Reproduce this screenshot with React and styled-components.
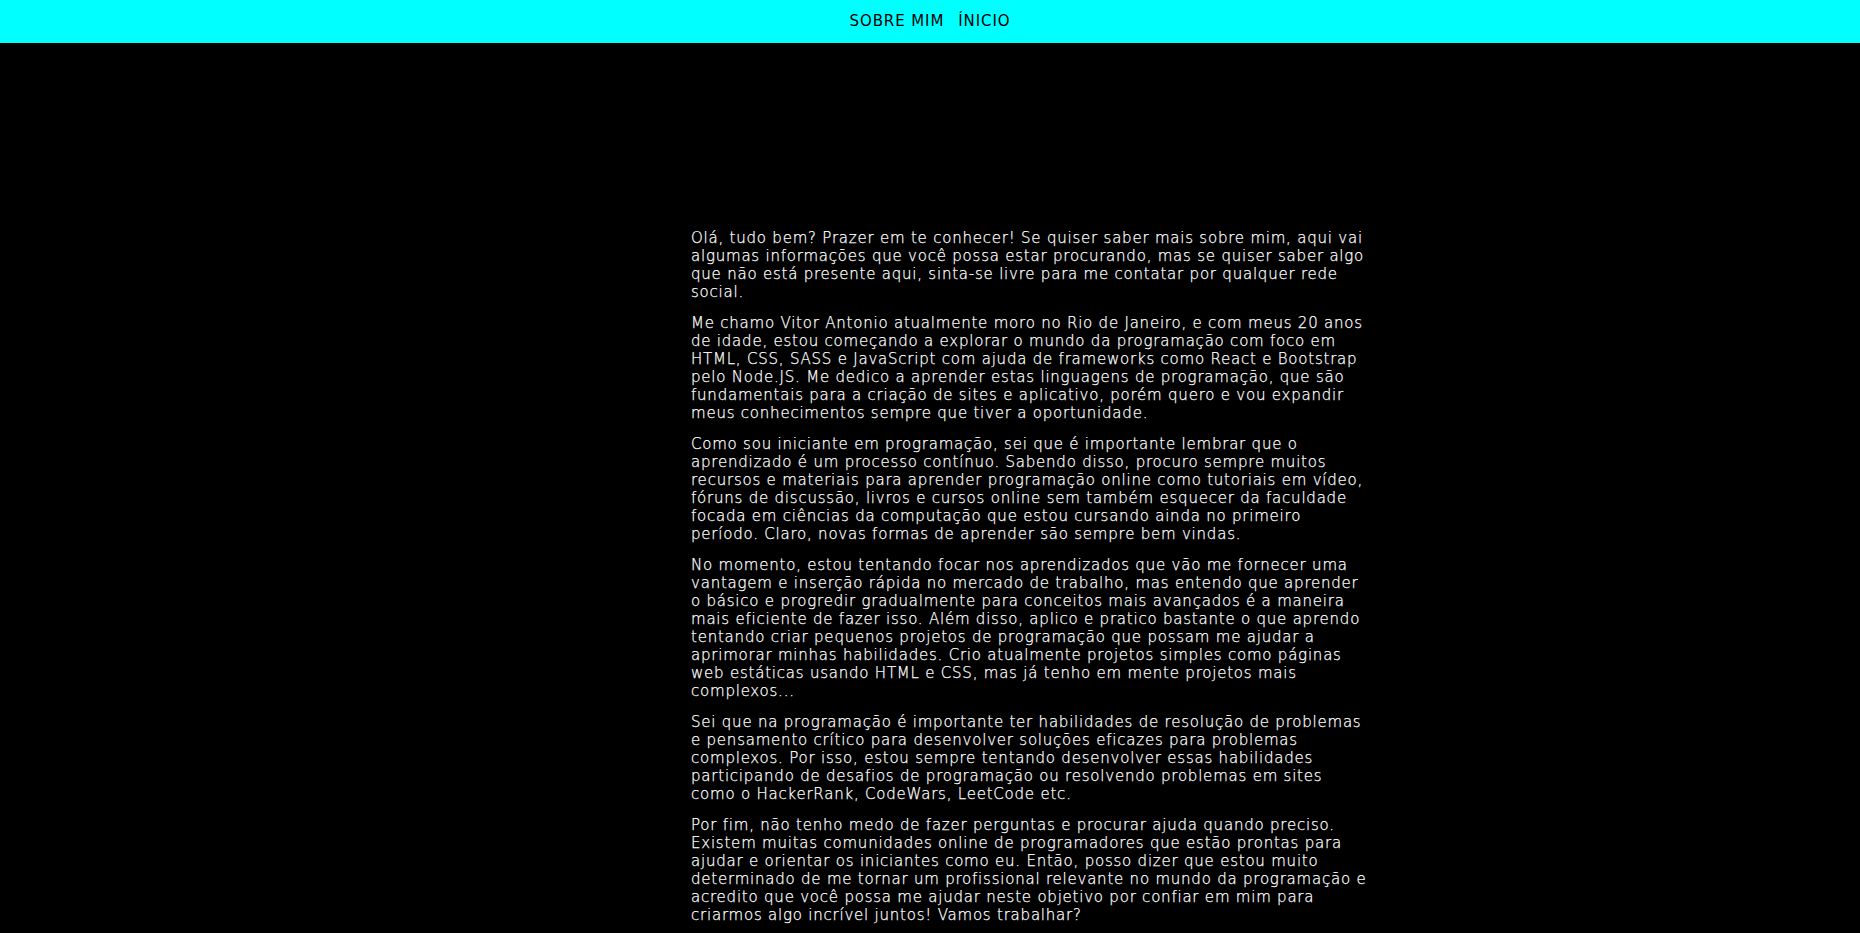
import React from "react";
import styled, { createGlobalStyle } from "styled-components";

const GlobalStyle = createGlobalStyle`
  html, body {
    margin: 0;
    padding: 0;
    background: #000000;
  }
  body {
    font-family: "DejaVu Sans", Verdana, sans-serif;
  }
`;

const Header = styled.header`
  height: 43px;
  box-sizing: border-box;
  padding-bottom: 2px;
  background: #00ffff;
  display: flex;
  align-items: center;
  justify-content: center;
`;

const Nav = styled.nav`
  display: flex;
  gap: 14px;
`;

const NavLink = styled.a`
  font-family: "DejaVu Sans", Verdana, sans-serif;
  font-size: 15px;
  font-weight: normal;
  letter-spacing: 0.9px;
  color: #000000;
  text-decoration: none;
  text-transform: uppercase;
`;

const Main = styled.main`
  display: flex;
  padding: 186px 0 0 691px;
`;

const Article = styled.article`
  width: 676px;
  color: #ffffff;
`;

const Paragraph = styled.p`
  margin: 0 0 13px;
  font-size: 15px;
  font-weight: 300;
  letter-spacing: 0.78px;
  line-height: 18px;
  -webkit-text-stroke: 0.25px #ffffff;
`;

const paragraphs = [
  "Olá, tudo bem? Prazer em te conhecer! Se quiser saber mais sobre mim, aqui vai algumas informações que você possa estar procurando, mas se quiser saber algo que não está presente aqui, sinta-se livre para me contatar por qualquer rede social.",
  "Me chamo Vitor Antonio atualmente moro no Rio de Janeiro, e com meus 20 anos de idade, estou começando a explorar o mundo da programação com foco em HTML, CSS, SASS e JavaScript com ajuda de frameworks como React e Bootstrap pelo Node.JS. Me dedico a aprender estas linguagens de programação, que são fundamentais para a criação de sites e aplicativo, porém quero e vou expandir meus conhecimentos sempre que tiver a oportunidade.",
  "Como sou iniciante em programação, sei que é importante lembrar que o aprendizado é um processo contínuo. Sabendo disso, procuro sempre muitos recursos e materiais para aprender programação online como tutoriais em vídeo, fóruns de discussão, livros e cursos online sem também esquecer da faculdade focada em ciências da computação que estou cursando ainda no primeiro período. Claro, novas formas de aprender são sempre bem vindas.",
  "No momento, estou tentando focar nos aprendizados que vão me fornecer uma vantagem e inserção rápida no mercado de trabalho, mas entendo que aprender o básico e progredir gradualmente para conceitos mais avançados é a maneira mais eficiente de fazer isso. Além disso, aplico e pratico bastante o que aprendo tentando criar pequenos projetos de programação que possam me ajudar a aprimorar minhas habilidades. Crio atualmente projetos simples como páginas web estáticas usando HTML e CSS, mas já tenho em mente projetos mais complexos...",
  "Sei que na programação é importante ter habilidades de resolução de problemas e pensamento crítico para desenvolver soluções eficazes para problemas complexos. Por isso, estou sempre tentando desenvolver essas habilidades participando de desafios de programação ou resolvendo problemas em sites como o HackerRank, CodeWars, LeetCode etc.",
  "Por fim, não tenho medo de fazer perguntas e procurar ajuda quando preciso. Existem muitas comunidades online de programadores que estão prontas para ajudar e orientar os iniciantes como eu. Então, posso dizer que estou muito determinado de me tornar um profissional relevante no mundo da programação e acredito que você possa me ajudar neste objetivo por confiar em mim para criarmos algo incrível juntos! Vamos trabalhar?",
];

export default function App() {
  return (
    <>
      <GlobalStyle />
      <Header>
        <Nav>
          <NavLink href="#sobre">Sobre mim</NavLink>
          <NavLink href="#inicio">Ínicio</NavLink>
        </Nav>
      </Header>
      <Main>
        <Article>
          {paragraphs.map((text, i) => (
            <Paragraph key={i}>{text}</Paragraph>
          ))}
        </Article>
      </Main>
    </>
  );
}
